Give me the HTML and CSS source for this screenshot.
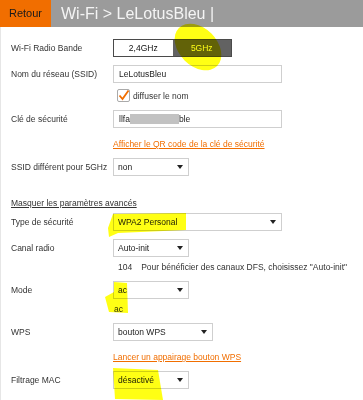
FILE: index.html
```html
<!DOCTYPE html>
<html lang="fr">
<head>
  <meta charset="UTF-8">
  <meta name="viewport" content="width=device-width, initial-scale=1.0">
  <title>Wi-Fi</title>
  <link rel="stylesheet" href="styles.css">
</head>
<body>
  <div class="page">
    <!-- barre du haut -->
    <div class="header">
      <div class="back">Retour</div>
      <div class="title">Wi-Fi &gt; LeLotusBleu |</div>
    </div>

    <div class="content">
      <div class="row band-row">
        <div class="label">Wi-Fi Radio Bande</div>
        <div class="band">
          <span>2,4GHz</span>
          <span class="on">5GHz</span>
        </div>
      </div>
      <div class="row">
        <div class="label">Nom du réseau (SSID)</div>
        <div class="field wide">LeLotusBleu</div>
      </div>
      <div class="row check">
        <div class="label"></div>
        <span class="box">
          <svg width="13" height="13" viewBox="0 0 13 13"><polyline points="2.5,6.5 5.5,10 11.5,1.5" fill="none" stroke="#f16e00" stroke-width="1.8"/></svg>
        </span>
        <span class="check-text">diffuser le nom</span>
      </div>
      <div class="row">
        <div class="label">Clé de sécurité</div>
        <div class="field wide">llfa<span class="hidden"></span>ble</div>
      </div>
      <div class="row link-row">
        <div class="label"></div>
        <a class="link" href="#">Afficher le QR code de la clé de sécurité</a>
      </div>
      <div class="row">
        <div class="label">SSID différent pour 5GHz</div>
        <div class="select">non</div>
      </div>

      <a class="advanced" href="#">Masquer les paramètres avancés</a>

      <div class="row first">
        <div class="label">Type de sécurité</div>
        <div class="select wide">WPA2 Personal</div>
      </div>
      <div class="row">
        <div class="label">Canal radio</div>
        <div class="select">Auto-init</div>
      </div>
      <div class="row sub">
        <div class="label"></div>
        <span class="note"><span class="num">104</span>Pour bénéficier des canaux DFS, choisissez "Auto-init"</span>
      </div>
      <div class="row">
        <div class="label">Mode</div>
        <div class="select">ac</div>
      </div>
      <div class="row sub">
        <div class="label"></div>
        <span class="value">ac</span>
      </div>
      <div class="row">
        <div class="label">WPS</div>
        <div class="select mid">bouton WPS</div>
      </div>
      <div class="row link-row">
        <div class="label"></div>
        <a class="link" href="#">Lancer un appairage bouton WPS</a>
      </div>
      <div class="row">
        <div class="label">Filtrage MAC</div>
        <div class="select">désactivé</div>
      </div>
    </div>

    <!-- surlignage au feutre jaune -->
    <svg class="marks" width="363" height="400" viewBox="0 0 363 400">
      <ellipse cx="198" cy="47" rx="27" ry="19" transform="rotate(45 198 47)"/>
      <path d="M113 214 L186 213 L186 230 L118 233 L109 237 L108 228 Z"/>
      <path d="M114 282 L127 283 L128 313 L109 312 L105 297 L114 292 Z"/>
      <path d="M113 368 L158 370 L163 400 L115 399 Z"/>
    </svg>
  </div>
</body>
</html>
```

FILE: styles.css
```css
body {
  margin: 0;
  padding: 0;
  font-family: "Liberation Sans", Arial, sans-serif;
  background: #fff;
  color: #333;
}
.page {
  position: relative;
  width: 363px;
  height: 400px;
  overflow: hidden;
}
.header {
  display: flex;
  height: 27px;
}
.back {
  width: 51px;
  box-sizing: border-box;
  padding-left: 9px;
  background: #f16e00;
  color: #1a1a1a;
  font-size: 11px;
  line-height: 27px;
}
.title {
  flex: 1;
  padding-left: 10px;
  background: #9b9b9b;
  color: #f4f4f4;
  font-size: 16px;
  line-height: 27px;
}
.content {
  padding: 12px 0 0 10px;
  margin-left: 1px;
  border-left: 1px solid #e6e6e6;
  height: 400px;
  box-sizing: border-box;
  margin-left: 0;
  font-size: 8.5px;
}
.row {
  display: flex;
  align-items: center;
  margin-top: 8px;
}
.band-row {
  margin-top: 0;
}
.row.check {
  margin-top: 6px;
}
.row.sub {
  margin-top: 4px;
  line-height: 12px;
}
.row.link-row {
  margin-top: 10px;
  line-height: 12px;
}
.row.first {
  margin-top: 4px;
}
.label {
  width: 102px;
  flex-shrink: 0;
  color: #333;
}
.band {
  display: flex;
  width: 119px;
  height: 18px;
  box-sizing: border-box;
  border: 1px solid #4a4a4a;
}
.band span {
  flex: 1;
  text-align: center;
  line-height: 16px;
  color: #111;
}
.band .on {
  background: #626262;
  color: #fff;
}
.field, .select {
  position: relative;
  height: 18px;
  width: 76px;
  box-sizing: border-box;
  border: 1px solid #cfcfcf;
  padding-left: 4px;
  line-height: 16px;
  color: #222;
  background: #fff;
}
.field {
  padding-left: 5px;
}
.wide {
  width: 169px;
}
.mid {
  width: 100px;
}
.select::after {
  content: "";
  position: absolute;
  right: 5px;
  top: 6px;
  border-left: 3.5px solid transparent;
  border-right: 3.5px solid transparent;
  border-top: 4px solid #222;
}
.hidden {
  display: inline-block;
  width: 49px;
  height: 10px;
  vertical-align: -2px;
  background: #c2c2c2;
}
.box {
  width: 13px;
  height: 13px;
  box-sizing: border-box;
  border: 1px solid #aaa;
  border-radius: 2px;
  margin-left: 4px;
  display: flex;
}
.box svg {
  margin: -1px;
}
.check-text {
  margin-left: 3px;
  color: #333;
}
.link {
  color: #f16e00;
  text-decoration: underline;
}
.advanced {
  display: block;
  margin-top: 21px;
  line-height: 12px;
  color: #333;
  text-decoration: underline;
}
.note {
  margin-left: 5px;
  color: #333;
}
.note .num {
  margin-right: 9px;
}
.value {
  margin-left: 1px;
  color: #333;
}
.marks {
  position: absolute;
  top: 0;
  left: 0;
  pointer-events: none;
  mix-blend-mode: multiply;
  fill: #ffff00;
  opacity: 0.92;
}
```
